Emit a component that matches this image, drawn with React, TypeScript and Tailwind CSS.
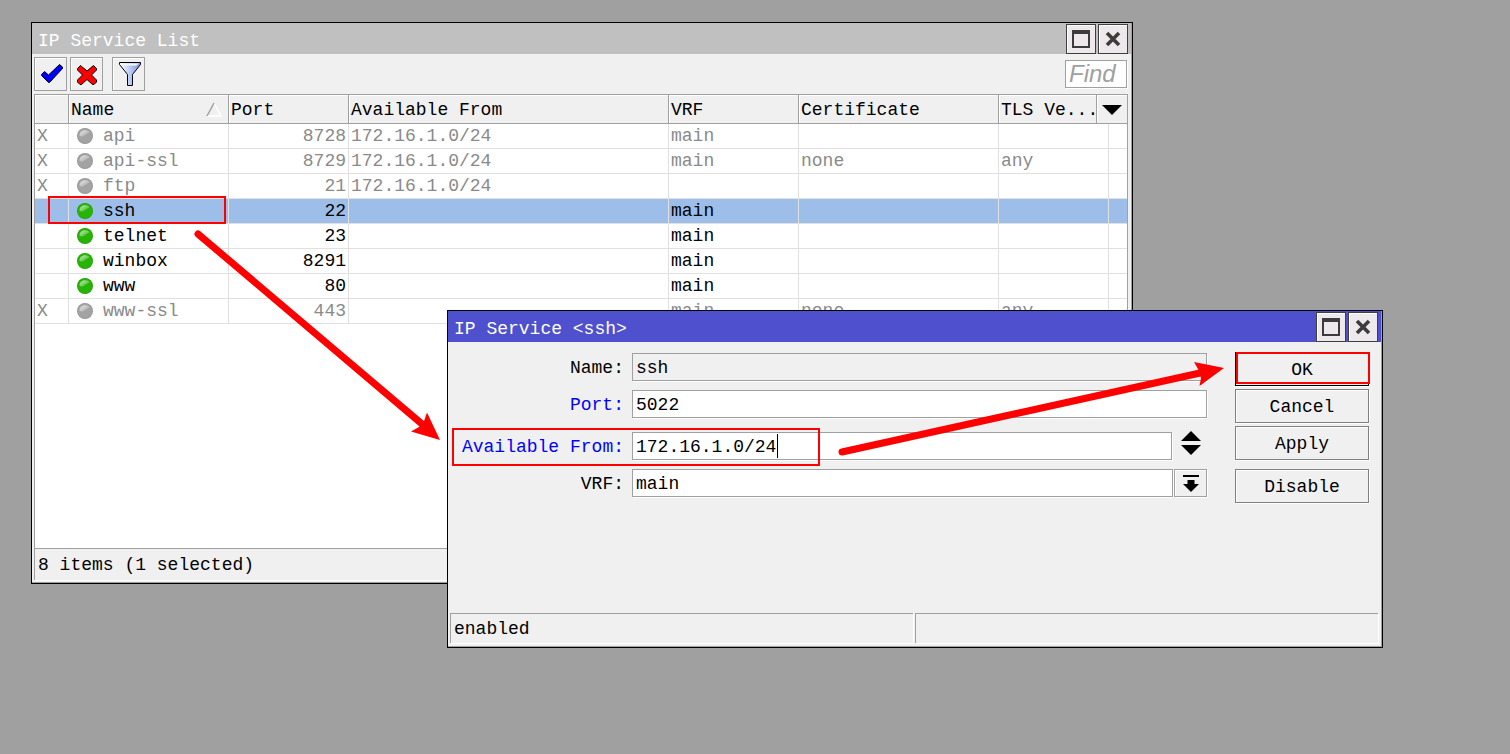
import { useState } from "react";
import type { ReactNode } from "react";

type Service = {
  name: string;
  port: number;
  from?: string;
  vrf?: string;
  cert?: string;
  tls?: string;
  enabled?: boolean;
  selected?: boolean;
};

const services: Service[] = [
  { name: "api", port: 8728, from: "172.16.1.0/24", vrf: "main" },
  { name: "api-ssl", port: 8729, from: "172.16.1.0/24", vrf: "main", cert: "none", tls: "any" },
  { name: "ftp", port: 21, from: "172.16.1.0/24" },
  { name: "ssh", port: 22, vrf: "main", enabled: true, selected: true },
  { name: "telnet", port: 23, vrf: "main", enabled: true },
  { name: "winbox", port: 8291, vrf: "main", enabled: true },
  { name: "www", port: 80, vrf: "main", enabled: true },
  { name: "www-ssl", port: 443, vrf: "main", cert: "none", tls: "any" },
];

function Gradients() {
  return (
    <svg width="0" height="0" className="absolute" aria-hidden="true">
      <defs>
        <linearGradient id="shine" x1="0" y1="0" x2="1" y2="1">
          <stop offset="0" stopColor="#fff" stopOpacity="0.75" />
          <stop offset="1" stopColor="#fff" stopOpacity="0" />
        </linearGradient>
        <linearGradient id="funnel" x1="0" y1="0" x2="1" y2="0">
          <stop offset="0" stopColor="#ffffff" />
          <stop offset="0.5" stopColor="#b9cbf5" />
          <stop offset="1" stopColor="#7f93d8" />
        </linearGradient>
      </defs>
    </svg>
  );
}

function Led({ on }: { on?: boolean }) {
  return (
    <svg width="17" height="17" viewBox="0 0 17 17" className="shrink-0" aria-hidden="true">
      <circle cx="8" cy="8" r="8" fill={on ? "#22a406" : "#969696"} />
      <circle cx="8" cy="8" r="7.2" fill={on ? "#28b407" : "#a3a3a3"} />
      <path d="M2.500 7.500C2.500 4.500 4.800 2.200 8 2.200c2.200 0 3.800.9 4.600 2.300C11 5 8.500 6.500 6.500 8 5 8.800 3.500 8.800 2.500 7.500Z" fill="url(#shine)" />
    </svg>
  );
}

function WindowControls() {
  const cls =
    "flex size-[30px] items-center justify-center border border-[#3f3f3f] bg-[#ece8ec] shadow-[inset_1px_1px_0_#fff]";
  return (
    <div className="flex gap-[2px] pt-px">
      <button type="button" aria-label="Maximize" className={cls}>
        <svg width="18" height="18" viewBox="0 0 18 18" shapeRendering="crispEdges">
          <path d="M0 0h18v18H0ZM2 4v12h14V4Z" fill="#3c3c3c" fillRule="evenodd" />
        </svg>
      </button>
      <button type="button" aria-label="Close" className={cls}>
        <svg width="16" height="16" viewBox="0 0 16 16">
          <path d="M2 2 14 14M14 2 2 14" stroke="#3c3c3c" strokeWidth="3.6" />
        </svg>
      </button>
    </div>
  );
}

function ToolButton({ label, children }: { label: string; children: ReactNode }) {
  return (
    <button
      type="button"
      aria-label={label}
      className="h-[34px] w-[33px] border border-[#a0a0a0] bg-[#f0f0f0] shadow-[inset_1px_1px_0_#fff]"
    >
      <svg width="31" height="32" viewBox="1 1 31 32" className="block">
        {children}
      </svg>
    </button>
  );
}

function ServiceList() {
  const th = "border-b border-l border-[#a0a0a0] pl-[2px] pt-[2px] text-left font-normal shadow-[inset_1px_1px_0_#fff]";
  const td = "h-[25px] border-b border-l border-[#e0e0e0] pl-[2px]";
  return (
    <section
      aria-label="IP Service List"
      className="absolute left-[31px] top-[22px] flex h-[562px] w-[1102px] flex-col border border-black bg-[#f0f0f0] shadow-[inset_-1px_-1px_0_#a0a0a0]"
    >
      <header className="mr-px flex h-[31px] shrink-0 items-center justify-between bg-[#c0c0c0] pl-[6px] pr-[3px]">
        <h1 className="pt-1 text-white">IP Service List</h1>
        <WindowControls />
      </header>
      <div className="flex h-[40px] shrink-0 items-start pl-[2px] pr-[5px] pt-[3px]">
        <ToolButton label="Enable">
          <path d="M7.500 17.500 10.500 14.500 14.500 18 25.500 7.500 28.500 10V11.500L15.500 25.500H14.500L7.500 18.500Z" fill="#0000ff" stroke="#000" strokeWidth="1" />
        </ToolButton>
        <div className="ml-[3px] flex">
          <ToolButton label="Disable service">
            <path
              d="M10.500 8.500 17 14 23.500 8.500 26.500 11.500V13L21.500 18 26.500 23V25L24 27.500H22.500L17 22.500 11.500 27.500H10L7.500 25V23L12.500 18 7.500 13V11.500Z"
              fill="#ff0000"
              stroke="#000"
              strokeWidth="1"
            />
          </ToolButton>
        </div>
        <div className="ml-[9px] flex">
          <ToolButton label="Filter">
            <path d="M7.500 5.500H28.500V7.500L20.500 17.500V28.500H15.500V17.500L7.500 7.500Z" fill="url(#funnel)" stroke="#000" strokeWidth="1" />
            <path d="M9 6.500H27L24 8.500H12Z" fill="#f4f8ff" />
          </ToolButton>
        </div>
        <input
          aria-label="Find"
          placeholder="Find"
          className="ml-auto mt-[3px] h-[28px] w-[62px] border border-[#a0a0a0] bg-white pl-[3px] font-['Liberation_Sans',sans-serif] text-[24px] italic leading-[26px] shadow-[1px_1px_0_#fff] outline-none placeholder:text-[#a0a0a0]"
        />
      </div>
      <div className="ml-[2px] mr-[4px] min-h-0 flex-1 border-x border-t border-[#a0a0a0] bg-white">
        <table className="w-full table-fixed border-separate border-spacing-0">
          <colgroup>
            <col className="w-[33px]" />
            <col className="w-[160px]" />
            <col className="w-[120px]" />
            <col className="w-[320px]" />
            <col className="w-[130px]" />
            <col className="w-[200px]" />
            <col className="w-[98px]" />
            <col className="w-[12px]" />
            <col className="w-[19px]" />
          </colgroup>
          <thead className="bg-[#f0f0f0]">
            <tr className="h-[29px]">
              <th aria-label="Flags" className="border-b border-[#a0a0a0] shadow-[inset_1px_1px_0_#fff]" />
              <th className={th}>
                <div className="flex items-center justify-between pr-[6px]">
                  Name
                  <svg width="16" height="16" viewBox="0 0 16 16" fill="none" aria-hidden="true">
                    <path d="M8 1 15 14H1" stroke="#fff" strokeWidth="1.500" />
                    <path d="M1 14 8 1" stroke="#a0a0a0" strokeWidth="1.500" />
                  </svg>
                </div>
              </th>
              <th className={th}>Port</th>
              <th className={th}>Available From</th>
              <th className={th}>VRF</th>
              <th className={th}>Certificate</th>
              <th className={`${th} whitespace-nowrap`}>TLS Ve...</th>
              <th colSpan={2} className="border-b border-l border-[#a0a0a0] shadow-[inset_1px_1px_0_#fff]">
                <button type="button" aria-label="Columns" className="flex w-full justify-center pt-[2px]">
                  <svg width="20" height="10" viewBox="0 0 20 10">
                    <path d="M0 0H20L10 10Z" fill="#000" />
                  </svg>
                </button>
              </th>
            </tr>
          </thead>
          <tbody>
            {services.map((s) => (
              <tr key={s.name} className={`${s.selected ? "bg-[#9dbee9]" : "bg-white"} ${s.enabled ? "text-black" : "text-[#8a8a8a]"}`}>
                <td className="h-[25px] border-b border-[#e0e0e0] pl-[2px]">{s.enabled ? "" : "X"}</td>
                <td className={td}>
                  <div className="flex items-center gap-[9px] pl-[6px]">
                    <Led on={s.enabled} />
                    {s.name}
                  </div>
                </td>
                <td className={`${td} pr-[2px] text-right`}>{s.port}</td>
                <td className={td}>{s.from}</td>
                <td className={td}>{s.vrf}</td>
                <td className={td}>{s.cert}</td>
                <td colSpan={2} className={td}>{s.tls}</td>
                <td className={td} />
              </tr>
            ))}
          </tbody>
        </table>
      </div>
      <footer className="mb-[3px] ml-[2px] mr-[4px] h-[32px] shrink-0 border-l border-t border-[#a0a0a0] pl-[3px] pt-1 shadow-[1px_1px_0_#fff]">
        8 items (1 selected)
      </footer>
    </section>
  );
}

const field = "h-[28px] w-full min-w-0 border border-[#a0a0a0] px-[3px] pt-[2px] leading-[24px] shadow-[1px_1px_0_#fff] outline-none";
const action = "h-[34px] w-full border bg-[#f0f0f0] pt-[2px] shadow-[inset_1px_1px_0_#fff,1px_1px_0_#fff]";

function Row({ id, label, changed, children }: { id: string; label: string; changed?: boolean; children: ReactNode }) {
  return (
    <div className="flex h-[28px] items-center">
      <label htmlFor={id} className={`w-[184px] shrink-0 pr-2 pt-[2px] text-right ${changed ? "text-[#0000ff]" : "text-black"}`}>
        {label}:
      </label>
      {children}
    </div>
  );
}

function ServiceDialog() {
  const [port, setPort] = useState("5022");
  const [from, setFrom] = useState("172.16.1.0/24");
  return (
    <section
      role="dialog"
      aria-label="IP Service ssh"
      className="absolute left-[447px] top-[310px] flex h-[338px] w-[936px] flex-col border border-black bg-[#f0f0f0] shadow-[inset_-1px_-1px_0_#a0a0a0]"
    >
      <header className="mr-px flex h-[31px] shrink-0 items-center justify-between bg-[#4f50cd] pl-[6px] pr-[3px]">
        <h2 className="pt-1 text-white">IP Service &lt;ssh&gt;</h2>
        <WindowControls />
      </header>
      <form className="flex flex-1 items-start gap-[28px] pr-[13px]" onSubmit={(e) => e.preventDefault()}>
        <div className="flex flex-1 flex-col gap-[9px] pt-[11px]">
          <Row id="name" label="Name">
            <input id="name" readOnly value="ssh" className={`${field} bg-[#f0f0f0]`} />
          </Row>
          <Row id="port" label="Port" changed>
            <input id="port" value={port} onChange={(e) => setPort(e.target.value)} className={`${field} bg-white`} />
          </Row>
          <div className="pt-[5px]">
            <Row id="from" label="Available From" changed>
              <div className="relative flex min-w-0 flex-1">
                <input id="from" value={from} onChange={(e) => setFrom(e.target.value)} className={`${field} bg-white`} />
                <span className="absolute left-[145px] top-[2px] h-[24px] w-px bg-black" />
              </div>
              <div className="flex w-[35px] shrink-0 flex-col items-center gap-[4px] pb-[6px] pl-[2px]">
                <button type="button" aria-label="Add entry">
                  <svg width="20" height="10" viewBox="0 0 20 10" className="block">
                    <path d="M0 10H20L10 0Z" fill="#000" />
                  </svg>
                </button>
                <button type="button" aria-label="Remove entry">
                  <svg width="20" height="10" viewBox="0 0 20 10" className="block">
                    <path d="M0 0H20L10 10Z" fill="#000" />
                  </svg>
                </button>
              </div>
            </Row>
          </div>
          <Row id="vrf" label="VRF">
            <select id="vrf" className={`${field} appearance-none bg-white`}>
              <option>main</option>
            </select>
            <button
              type="button"
              aria-label="Show VRF list"
              className="ml-px flex h-[28px] w-[33px] shrink-0 items-center justify-center border border-[#a0a0a0] bg-[#f0f0f0] shadow-[inset_1px_1px_0_#fff,1px_1px_0_#fff]"
            >
              <svg width="16" height="17" viewBox="0 0 16 17">
                <path d="M0 0H16V2H0ZM4.500 5H11.500V9H16L8 17 0 9H4.500Z" fill="#000" />
              </svg>
            </button>
          </Row>
        </div>
        <div className="flex w-[134px] shrink-0 flex-col gap-[3px] pt-[10px]">
          <button type="submit" className={`${action} border-black`}>OK</button>
          <button type="button" className={`${action} border-[#808080]`}>Cancel</button>
          <button type="button" className={`${action} border-[#808080]`}>Apply</button>
          <div className="pt-[6px]">
            <button type="button" className={`${action} border-[#808080]`}>Disable</button>
          </div>
        </div>
      </form>
      <footer className="mb-[4px] ml-[2px] mr-[4px] grid h-[30px] shrink-0 grid-cols-2 gap-[2px]">
        <div className="border-l border-t border-[#a0a0a0] pl-[3px] pt-[3px] shadow-[1px_1px_0_#fff]">enabled</div>
        <div className="border-l border-t border-[#a0a0a0] shadow-[1px_1px_0_#fff]" />
      </footer>
    </section>
  );
}

function Annotations() {
  return (
    <svg width="1510" height="754" viewBox="0 0 1510 754" className="pointer-events-none absolute left-0 top-0" aria-hidden="true">
      <g fill="none" stroke="#ff0000" strokeWidth="2" shapeRendering="crispEdges">
        <rect x="49" y="197" width="176" height="26" />
        <rect x="453" y="429" width="366" height="36" />
        <rect x="1237" y="353" width="132" height="30" />
      </g>
      <g stroke="#ff0000" strokeWidth="7" strokeLinecap="round">
        <path d="M198 234 422 424" />
        <path d="M842 452 1200 373" />
      </g>
      <g fill="#ff0000">
        <path d="M440 440 427 412.500 424 421 419 427 411 431.500Z" />
        <path d="M1224 368 1194 362 1198 369 1201 378 1199.500 386Z" />
      </g>
    </svg>
  );
}

export default function App() {
  return (
    <main className="relative min-h-screen overflow-hidden bg-[#a0a0a0] font-['Liberation_Mono',monospace] text-[18px] leading-[24px] text-black">
      <Gradients />
      <ServiceList />
      <ServiceDialog />
      <Annotations />
    </main>
  );
}
